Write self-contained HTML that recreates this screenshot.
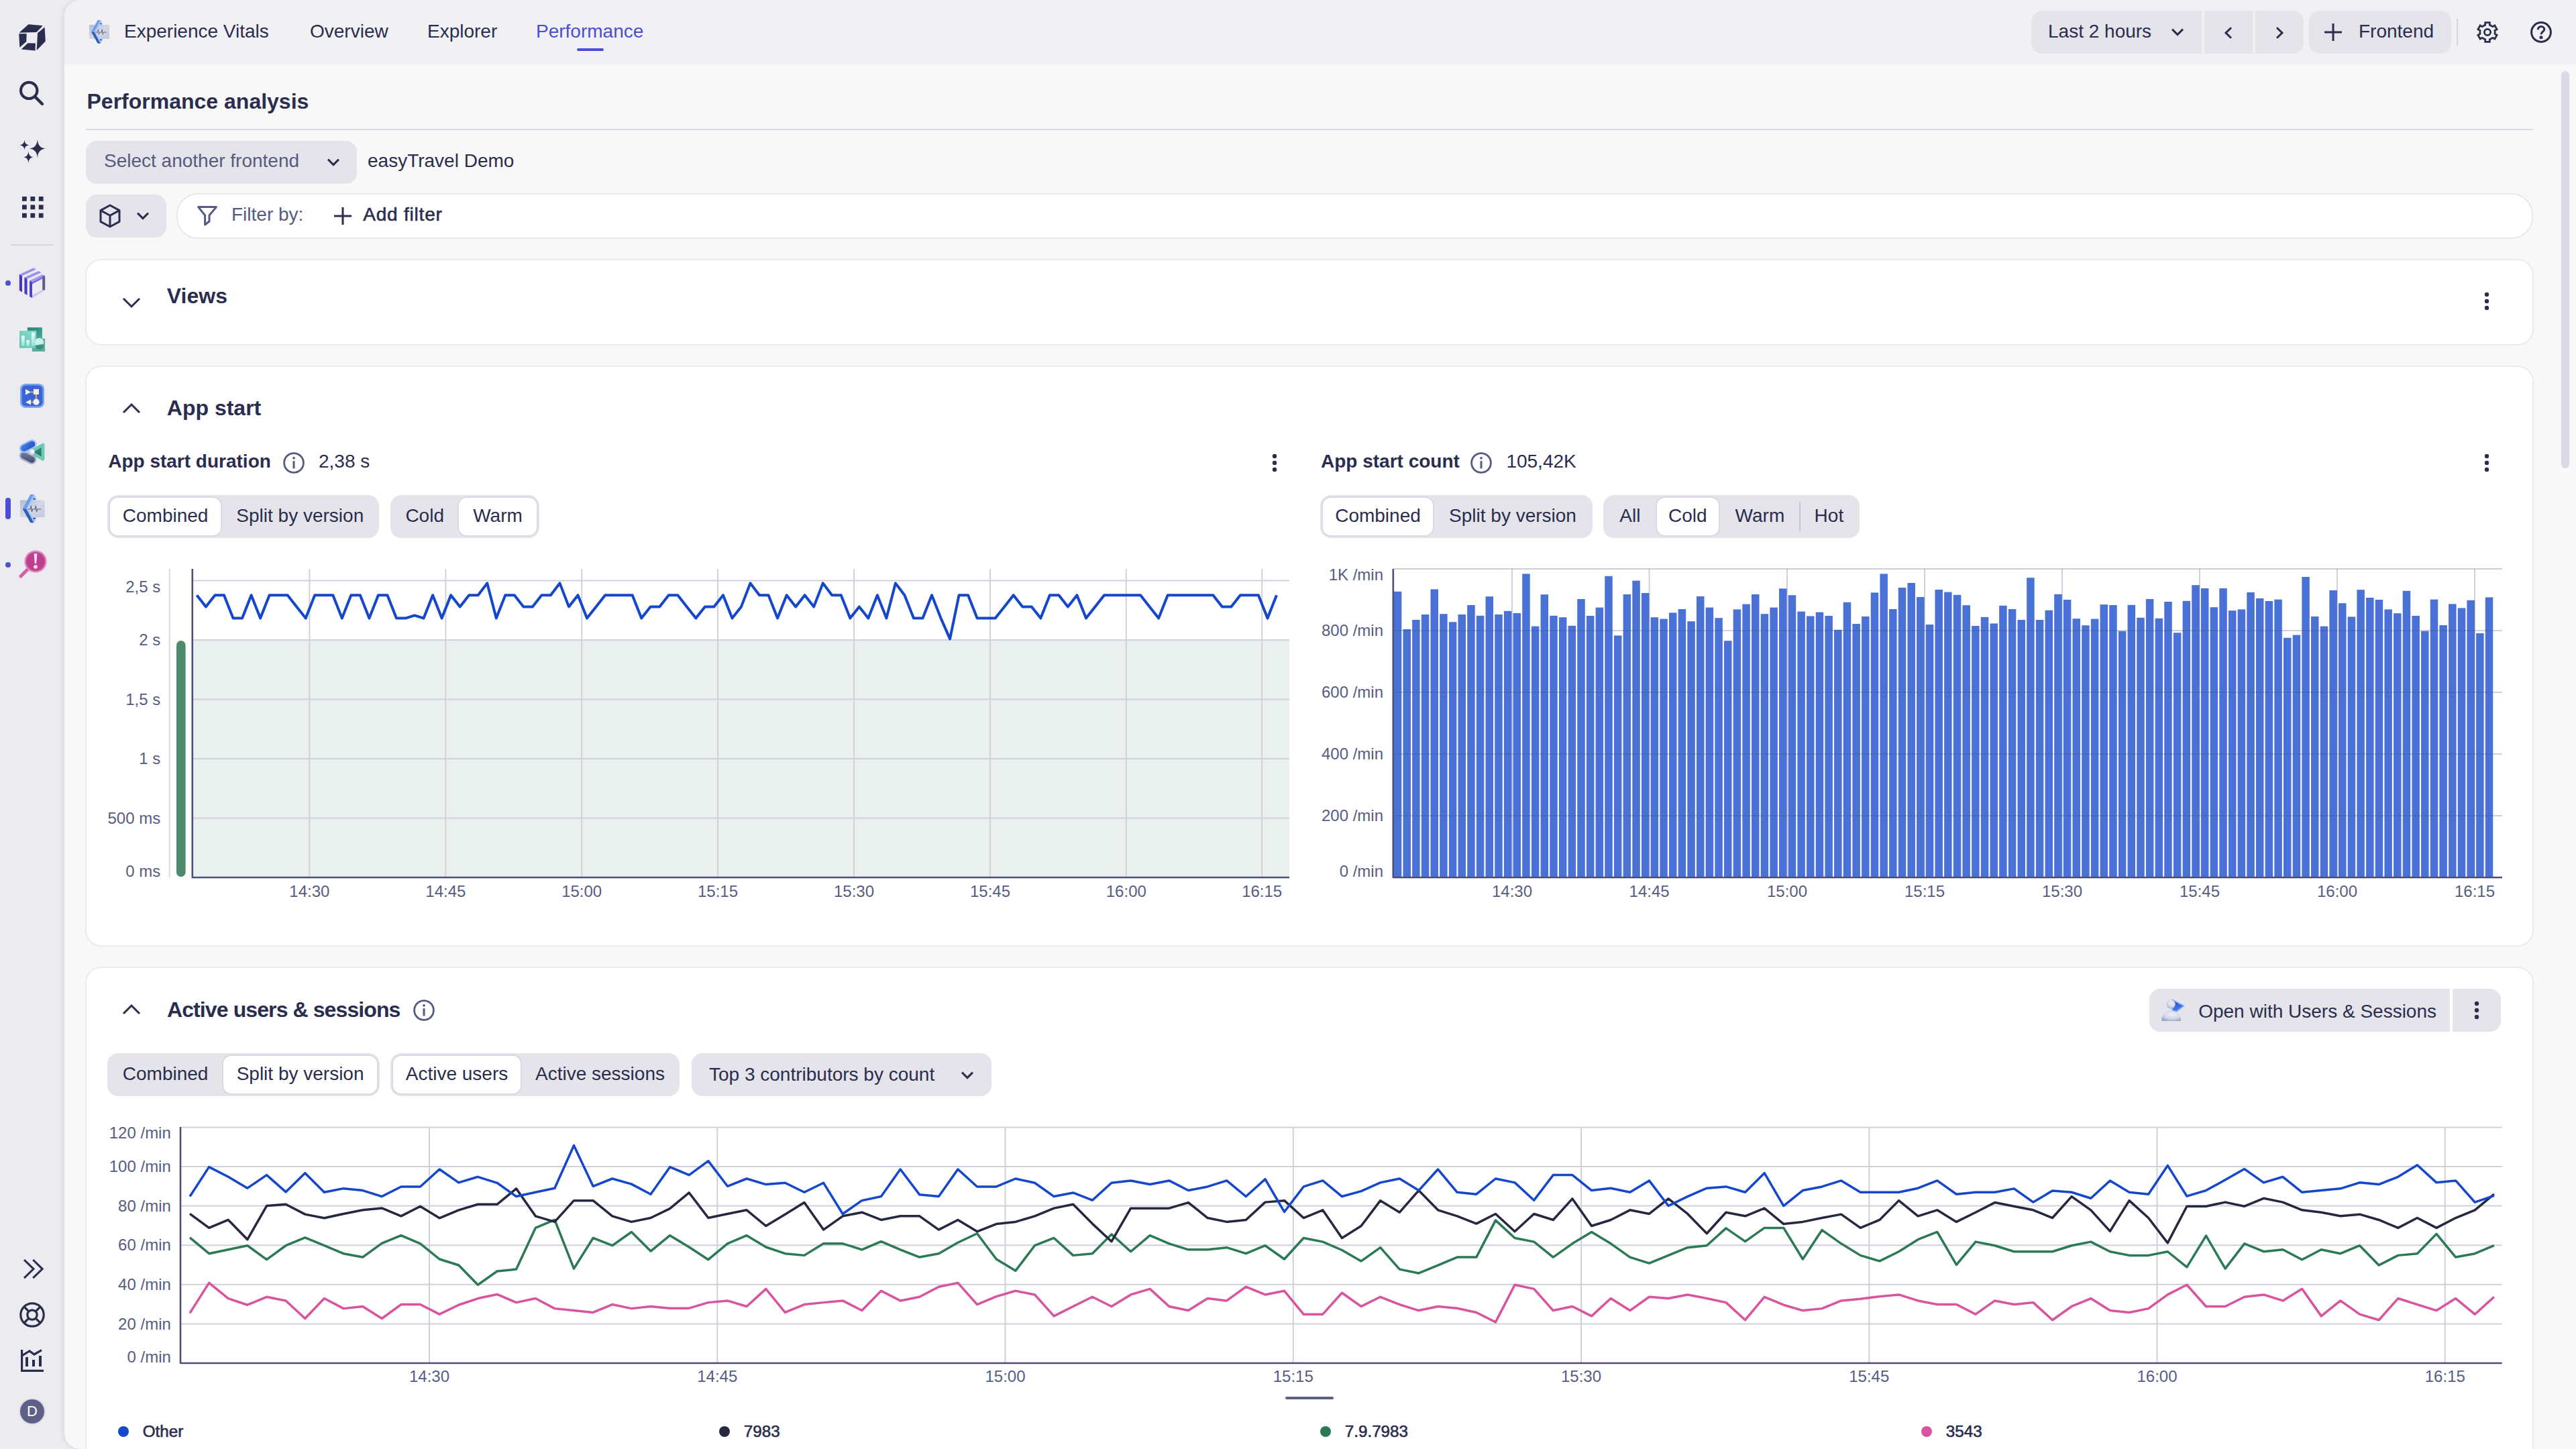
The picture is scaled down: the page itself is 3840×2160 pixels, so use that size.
<!DOCTYPE html>
<html><head><meta charset="utf-8"><title>Experience Vitals - Performance</title><style>
html,body{margin:0;padding:0;overflow:hidden;background:#f8f8f9;}
#root{position:relative;width:1920px;height:1080px;zoom:2;overflow:hidden;font-family:"Liberation Sans",sans-serif;color:#2a2d4e;background:#ebebf0;}
.a{position:absolute;box-sizing:border-box;}
.t{position:absolute;white-space:nowrap;}
svg{position:absolute;overflow:visible;}
@media (max-width: 2600px){#root{zoom:1;}}
</style></head>
<body><div id="root">
<div class="a" style="left:48px;top:0px;width:1872px;height:1080px;background:#f8f8f9;border-radius:12px 0 0 12px;box-shadow:-1px 0 3px rgba(40,40,70,0.10);"></div>
<div class="a" style="left:48px;top:0px;width:1872px;height:48px;background:#f1f1f4;border-radius:12px 0 0 0;"></div>
<svg style="left:14px;top:18px" width="20" height="20" viewBox="0 0 20 20" fill="#2a2d4e"><path d="M0.31 6.32 L7.21 0.1 L17.91 1.14 L13.25 5.97 Z"/><path d="M14.03 6.58 L19.29 2.26 L19.9 12.79 L13.34 19.52 Z"/><path d="M0.14 7.18 L5.83 7.18 L5.66 13.05 L0.66 17.36 Z"/><path d="M1.87 18.74 L6.7 14.08 L12.48 14.25 L12.22 19.77 Z"/></svg>
<svg style="left:13.5px;top:59.5px" width="20" height="20" viewBox="0 0 20 20"><circle cx="8.1" cy="7.95" r="6.1" fill="none" stroke="#2a2d4e" stroke-width="2"/><path d="M12.8 12.8 L18 18" stroke="#2a2d4e" stroke-width="2.2" stroke-linecap="round"/></svg>
<svg style="left:14px;top:103px" width="20" height="20" viewBox="0 0 20 20" fill="#2a2d4e"><path d="M13.90 0.90 Q14.32 7.32 19.90 7.80 Q14.32 8.28 13.90 14.70 Q13.48 8.28 7.90 7.80 Q13.48 7.32 13.90 0.90 Z M4.20 1.40 Q4.45 4.84 7.70 5.10 Q4.45 5.36 4.20 8.80 Q3.96 5.36 0.70 5.10 Q3.96 4.84 4.20 1.40 Z M7.20 9.90 Q7.45 13.81 10.80 14.10 Q7.45 14.39 7.20 18.30 Q6.95 14.39 3.60 14.10 Q6.95 13.81 7.20 9.90 Z"/></svg>
<svg style="left:15.5px;top:145.5px" width="17" height="17" viewBox="0 0 17 17" fill="#2a2d4e"><rect x="1.0" y="1.0" width="3.4" height="3.4"/><rect x="1.0" y="7.2" width="3.4" height="3.4"/><rect x="1.0" y="13.4" width="3.4" height="3.4"/><rect x="7.2" y="1.0" width="3.4" height="3.4"/><rect x="7.2" y="7.2" width="3.4" height="3.4"/><rect x="7.2" y="13.4" width="3.4" height="3.4"/><rect x="13.4" y="1.0" width="3.4" height="3.4"/><rect x="13.4" y="7.2" width="3.4" height="3.4"/><rect x="13.4" y="13.4" width="3.4" height="3.4"/></svg>
<div class="a" style="left:8px;top:182px;width:32px;height:1px;background:#d6d6e0;"></div>
<div class="a" style="left:4px;top:209px;width:4px;height:4px;border-radius:2px;background:#4b4fd0"></div>
<svg style="left:14px;top:199.5px" width="20" height="23" viewBox="0 0 20 23">
<path d="M0.4 5 L11 0.2 L13 1.3 L2.5 6.1 Z" fill="#9d90f5"/><path d="M0.4 5 L2.5 6.1 L2.5 18.2 L0.4 17 Z" fill="#4636c0"/>
<path d="M4.2 7.3 L14.8 2.5 L16.8 3.6 L6.3 8.4 Z" fill="#9d90f5"/><path d="M4.2 7.3 L6.3 8.4 L6.3 20.5 L4.2 19.3 Z" fill="#4a3cc8"/>
<path d="M8 9.6 L17.6 5 L19.6 6.1 L10 10.7 Z" fill="#a99cf7"/><path d="M8 9.6 L10 10.7 L10 22.6 L8 21.5 Z" fill="#4f42d0"/>
<path d="M17.6 6.1 L19.6 6.1 L19.6 16.6 L17.6 17.6 Z" fill="#5d6080"/>
<path d="M10 20.5 L17.6 16.6 L19.6 16.6 L10 22.6 Z" fill="#c9c6f5"/>
<path d="M10 10.7 L17.6 6.6 L17.6 8.2 L10 12.3 Z" fill="#7b6ee8"/>
</svg>
<svg style="left:14px;top:244px" width="20" height="18" viewBox="0 0 20 18">
<defs>
<linearGradient id="tc1" x1="0" y1="0" x2="1" y2="1"><stop offset="0" stop-color="#2a8676"/><stop offset="1" stop-color="#4aa898"/></linearGradient>
<linearGradient id="tc2" x1="0" y1="1" x2="1" y2="0"><stop offset="0" stop-color="#62bfae"/><stop offset="1" stop-color="#8fe0d3"/></linearGradient>
<linearGradient id="tc3" x1="0" y1="0" x2="0" y2="1"><stop offset="0" stop-color="#ecfffb"/><stop offset="1" stop-color="#8fe3d7"/></linearGradient>
</defs>
<rect x="6.43" y="0.04" width="11.03" height="8.4" fill="url(#tc1)"/>
<rect x="9.93" y="8.38" width="9.6" height="9.6" fill="#56ae9e"/>
<rect x="0.51" y="2.55" width="12.56" height="12.82" fill="url(#tc2)"/>
<rect x="1.95" y="6.13" width="2.42" height="7.8" fill="url(#tc3)"/>
<rect x="5.62" y="9.54" width="2.34" height="4.4" fill="url(#tc3)"/>
<rect x="9.48" y="3.9" width="2.42" height="10.04" fill="url(#tc3)"/>
<path d="M12.15 13.35 A3.2 3.2 0 0 0 18.55 13.35 Z" fill="#3f8b7d"/>
<path d="M12.15 13.35 L12.15 10.15 A3.2 3.2 0 0 1 18.4 12.3 Z" fill="#c8f3ec"/>
</svg>
<svg style="left:15px;top:286px" width="18" height="18" viewBox="0 0 18 18">
<rect x="0" y="0" width="18" height="18" rx="4" fill="#7aa3f4"/><rect x="1.3" y="1.3" width="15.4" height="15.4" rx="3" fill="#3d64d4"/>
<path d="M4 4 L8 6.2 L4 8.4 Z" fill="#eef2ff"/><rect x="10" y="4" width="4" height="4" fill="#eef2ff"/>
<path d="M8 11.8 L4 13.8 L8 15.8 Z" fill="#eef2ff"/><circle cx="12" cy="13.6" r="2.3" fill="#eef2ff"/>
<path d="M8 6.2 L10 6.2 M12 8 L12 11.3 M8 13.8 L9.8 13.8" stroke="#f0a83c" stroke-width="1"/>
</svg>
<svg style="left:13px;top:326px" width="22" height="22" viewBox="0 0 22 22">
<defs>
<linearGradient id="sh1" x1="0" y1="0" x2="1" y2="1"><stop offset="0" stop-color="#4f86e6"/><stop offset="1" stop-color="#1a4cc0"/></linearGradient>
<linearGradient id="sh2" x1="0" y1="0" x2="1" y2="1"><stop offset="0" stop-color="#8089a8"/><stop offset="1" stop-color="#363e5e"/></linearGradient>
<linearGradient id="sh3" x1="0" y1="0" x2="1" y2="1"><stop offset="0" stop-color="#4a9a88"/><stop offset="1" stop-color="#22695a"/></linearGradient>
<radialGradient id="sh4" cx="0.6" cy="0.35" r="0.7"><stop offset="0" stop-color="#ffffff"/><stop offset="1" stop-color="#c9cde6"/></radialGradient>
</defs>
<g transform="rotate(27 7.8 15.1)"><rect x="1.6" y="12.2" width="12.4" height="5.8" rx="2.9" fill="url(#sh2)" stroke="#a9b2cd" stroke-width="1.2"/></g>
<g transform="rotate(-27 7.8 6.6)"><rect x="1.6" y="3.7" width="12.4" height="5.8" rx="2.9" fill="url(#sh1)" stroke="#9cc0ff" stroke-width="1.2"/></g>
<path d="M9.3 10.9 L19 5.6 L19 16.2 Z" fill="url(#sh3)" stroke="#6ccab8" stroke-width="2.4" stroke-linejoin="round"/>
<circle cx="10.75" cy="10.9" r="2.15" fill="url(#sh4)"/>
</svg>
<div class="a" style="left:4px;top:371px;width:4px;height:16px;border-radius:2px;background:#4b4fd6"></div>
<svg style="left:14.9px;top:368.5px" width="18.3" height="21.2" viewBox="3.48 3.15 15 17.4">
<defs><linearGradient id="evg1" x1="0" y1="0" x2="1" y2="1"><stop offset="0" stop-color="#b3b9ce"/><stop offset="0.5" stop-color="#d3d8e8"/><stop offset="1" stop-color="#c2c8de"/></linearGradient></defs>
<rect x="3.48" y="6.63" width="15" height="10.52" rx="0.6" fill="url(#evg1)"/>
<path d="M11.93 3.15 L13.75 6.3 L11.0 6.3 Z" fill="#a9c4f2"/><path d="M11.43 4.97 L13.09 6.3 L11.0 6.3 Z" fill="#1e3f9a"/>
<path d="M11.93 20.54 L13.75 17.4 L11.2 17.4 Z" fill="#a9c4f2"/><path d="M11.43 18.72 L13.25 17.4 L11.43 17.4 Z" fill="#1e3f9a"/>
<path d="M9.77 3.15 L11.93 3.15 L7.29 11.93 L4.97 11.93 Z" fill="#6a9ef0"/>
<path d="M4.97 11.93 L7.29 11.93 L11.93 20.54 L9.77 20.54 Z" fill="#2e60b8"/>
<path d="M11.93 3.15 L12.5 4.1 L8.0 11.93 L7.29 11.93 Z" fill="#a9c4f2"/>
<path d="M7.29 11.93 L8.0 11.93 L12.5 19.6 L11.93 20.54 Z" fill="#a9c4f2"/>
<path d="M8.1 12.2 L9.7 12.2 L10.2 10 L10.6 13.8 L11.2 12.2 L12.6 12.2 L13.1 10 L13.5 13.8 L14.1 12.2 L16.3 12.2" fill="none" stroke="#5a5f72" stroke-width="0.45"/>
</svg>
<div class="a" style="left:4px;top:419px;width:4px;height:4px;border-radius:2px;background:#4b4fd0"></div>
<svg style="left:14px;top:410px" width="21" height="21" viewBox="0 0 21 21">
<path d="M7 14 L1.5 19.5" stroke="#d362a8" stroke-width="2.6" stroke-linecap="round"/>
<circle cx="12.5" cy="8.5" r="8.3" fill="#e083c0"/><circle cx="12.5" cy="8.5" r="7" fill="#bd3f8e"/>
<path d="M11.3 2.6 L13.7 2.6 L13.1 10 L11.9 10 Z" fill="#fbe6f3"/><circle cx="12.5" cy="12.5" r="1.4" fill="#fbe6f3"/>
</svg>
<svg style="left:17px;top:938px" width="16" height="16" viewBox="0 0 16 16" fill="none" stroke="#2a2d4e" stroke-width="1.5"><path d="M1 1 L8 7.8 L1 14.6"/><path d="M7.6 1 L14.6 7.8 L7.6 14.6"/></svg>
<svg style="left:14.5px;top:970.5px" width="19" height="19" viewBox="0 0 19 19" fill="none" stroke="#2a2d4e" stroke-width="1.6"><circle cx="9.5" cy="9.5" r="8.6"/><circle cx="9.5" cy="9.5" r="3.6"/><path d="M3.5 3.5 L6.9 6.9 M15.5 3.5 L12.1 6.9 M3.5 15.5 L6.9 12.1 M15.5 15.5 L12.1 12.1"/></svg>
<svg style="left:15.5px;top:1005.5px" width="17" height="17" viewBox="0 0 17 17" fill="none" stroke="#2a2d4e" stroke-width="1.6"><path d="M0.8 0.5 L0.8 16.2 L17 16.2"/><path d="M0.8 5 L6.5 1.5 L10 4 L15.5 0.8"/><path d="M4.5 6 L4.5 13 M9.5 8 L9.5 13 M14.5 5 L14.5 13" stroke-width="2"/></svg>
<div class="a" style="left:15px;top:1043px;width:18px;height:18px;border-radius:9px;background:#5d6087;box-shadow:0 0 0 1px #dcdcea;color:#fff;font-size:11px;line-height:18px;text-align:center;">D</div>
<svg style="left:66.48px;top:15.15px" width="15" height="17.4" viewBox="3.48 3.15 15 17.4">
<defs><linearGradient id="evg2" x1="0" y1="0" x2="1" y2="1"><stop offset="0" stop-color="#b3b9ce"/><stop offset="0.5" stop-color="#d3d8e8"/><stop offset="1" stop-color="#c2c8de"/></linearGradient></defs>
<rect x="3.48" y="6.63" width="15" height="10.52" rx="0.6" fill="url(#evg2)"/>
<path d="M11.93 3.15 L13.75 6.3 L11.0 6.3 Z" fill="#a9c4f2"/><path d="M11.43 4.97 L13.09 6.3 L11.0 6.3 Z" fill="#1e3f9a"/>
<path d="M11.93 20.54 L13.75 17.4 L11.2 17.4 Z" fill="#a9c4f2"/><path d="M11.43 18.72 L13.25 17.4 L11.43 17.4 Z" fill="#1e3f9a"/>
<path d="M9.77 3.15 L11.93 3.15 L7.29 11.93 L4.97 11.93 Z" fill="#6a9ef0"/>
<path d="M4.97 11.93 L7.29 11.93 L11.93 20.54 L9.77 20.54 Z" fill="#2e60b8"/>
<path d="M11.93 3.15 L12.5 4.1 L8.0 11.93 L7.29 11.93 Z" fill="#a9c4f2"/>
<path d="M7.29 11.93 L8.0 11.93 L12.5 19.6 L11.93 20.54 Z" fill="#a9c4f2"/>
<path d="M8.1 12.2 L9.7 12.2 L10.2 10 L10.6 13.8 L11.2 12.2 L12.6 12.2 L13.1 10 L13.5 13.8 L14.1 12.2 L16.3 12.2" fill="none" stroke="#5a5f72" stroke-width="0.45"/>
</svg>
<div class="t " style="left:92.5px;top:13.25px;font-size:14px;line-height:20px;">Experience Vitals</div>
<div class="t " style="left:231px;top:13.25px;font-size:14px;line-height:20px;">Overview</div>
<div class="t " style="left:318.5px;top:13.25px;font-size:14px;line-height:20px;">Explorer</div>
<div class="t " style="left:399.5px;top:13.25px;font-size:14px;line-height:20px;color:#4a4fd0;">Performance</div>
<div class="a" style="left:430px;top:36px;width:20px;height:2px;background:#4a4fd0;border-radius:1px;"></div>
<div class="a" style="left:1514px;top:8px;width:127px;height:32px;background:#e4e4ea;border-radius:8px 0 0 8px;"></div>
<div class="t " style="left:1526.5px;top:13.25px;font-size:14px;line-height:20px;">Last 2 hours</div>
<svg style="left:1618px;top:21px" width="10" height="6" viewBox="0 0 10 6" fill="none" stroke="#2a2d4e" stroke-width="1.5"><path d="M1 0.8 L5 4.8 L9 0.8"/></svg>
<div class="a" style="left:1643px;top:8px;width:36px;height:32px;background:#e4e4ea;"></div>
<svg style="left:1657.5px;top:20px" width="7" height="9" viewBox="0 0 7 9" fill="none" stroke="#2a2d4e" stroke-width="1.5"><path d="M5.5 0.6 L1.5 4.5 L5.5 8.4"/></svg>
<div class="a" style="left:1681px;top:8px;width:36px;height:32px;background:#e4e4ea;border-radius:0 8px 8px 0;"></div>
<svg style="left:1695.5px;top:20px" width="7" height="9" viewBox="0 0 7 9" fill="none" stroke="#2a2d4e" stroke-width="1.5"><path d="M1.5 0.6 L5.5 4.5 L1.5 8.4"/></svg>
<div class="a" style="left:1721px;top:8px;width:106px;height:32px;background:#e4e4ea;border-radius:8px;"></div>
<svg style="left:1732.5px;top:17.5px" width="13" height="13" viewBox="0 0 13 13" stroke="#2a2d4e" stroke-width="1.5"><path d="M6.5 0 L6.5 13 M0 6.5 L13 6.5"/></svg>
<div class="t " style="left:1758px;top:13.25px;font-size:14px;line-height:20px;">Frontend</div>
<div class="a" style="left:1831px;top:14px;width:1px;height:20px;background:#d4d4de;"></div>
<svg style="left:1846px;top:16px" width="16" height="16" viewBox="0 0 16 16" fill="none" stroke="#2a2d4e" stroke-width="1.4" stroke-linejoin="miter"><path d="M6.35 2.54 L6.35 0.80 L9.65 0.80 L9.65 2.54 L11.90 3.84 L13.41 2.97 L15.06 5.83 L13.55 6.70 L13.55 9.30 L15.06 10.17 L13.41 13.03 L11.90 12.16 L9.65 13.46 L9.65 15.20 L6.35 15.20 L6.35 13.46 L4.10 12.16 L2.59 13.03 L0.94 10.17 L2.45 9.30 L2.45 6.70 L0.94 5.83 L2.59 2.97 L4.10 3.84 Z"/><circle cx="8" cy="8" r="2.3"/></svg>
<svg style="left:1886px;top:16px" width="16" height="16" viewBox="0 0 16 16" fill="none" stroke="#2a2d4e" stroke-width="1.5"><circle cx="8" cy="8" r="7.2"/><path d="M5.6 6.1 C5.6 4.6 6.7 3.8 8 3.8 C9.4 3.8 10.4 4.7 10.4 5.9 C10.4 7.6 8 7.7 8 9.6"/><circle cx="8" cy="11.9" r="0.5" fill="#2a2d4e"/></svg>
<div class="a" style="left:1909px;top:53px;width:6px;height:296px;background:#dadae4;border-radius:3px;"></div>
<div class="t " style="left:64.75px;top:65.71px;font-size:16px;line-height:20px;font-weight:700;">Performance analysis</div>
<div class="a" style="left:64px;top:96px;width:1824px;height:1px;background:#d6d8e4;"></div>
<div class="a" style="left:64px;top:105px;width:202px;height:32px;background:#e4e4ea;border-radius:8px;"></div>
<div class="t " style="left:77.5px;top:110.15px;font-size:14px;line-height:20px;color:#555b82;">Select another frontend</div>
<svg style="left:243.5px;top:118px" width="10" height="6" viewBox="0 0 10 6" fill="none" stroke="#2a2d4e" stroke-width="1.5"><path d="M1 0.8 L5 4.8 L9 0.8"/></svg>
<div class="t " style="left:274px;top:110.15px;font-size:14px;line-height:20px;">easyTravel Demo</div>
<div class="a" style="left:64px;top:145px;width:60px;height:32px;background:#e4e4ea;border-radius:8px;"></div>
<svg style="left:74px;top:152px" width="16" height="18" viewBox="0 0 16 18" fill="none" stroke="#2a2d4e" stroke-width="1.5" stroke-linejoin="round"><path d="M8 1 L15 4.8 L15 13.2 L8 17 L1 13.2 L1 4.8 Z"/><path d="M1 4.8 L8 8.6 L15 4.8 M8 8.6 L8 17"/></svg>
<svg style="left:101.5px;top:158px" width="10" height="6" viewBox="0 0 10 6" fill="none" stroke="#2a2d4e" stroke-width="1.5"><path d="M1 0.8 L5 4.8 L9 0.8"/></svg>
<div class="a" style="left:131.5px;top:144px;width:1756.5px;height:34px;background:#fff;border:1px solid #e9e9ed;border-radius:16px;"></div>
<svg style="left:147px;top:153.5px" width="15" height="15" viewBox="0 0 15 15" fill="none" stroke="#555b82" stroke-width="1.5" stroke-linejoin="round"><path d="M0.8 0.8 L14.2 0.8 L9 7 L9 11.5 L5.8 14 L5.8 7 Z"/></svg>
<div class="t " style="left:172.5px;top:150.15px;font-size:14px;line-height:20px;color:#555b82;">Filter by:</div>
<svg style="left:249px;top:154.5px" width="13" height="13" viewBox="0 0 13 13" stroke="#2a2d4e" stroke-width="1.5"><path d="M6.5 0 L6.5 13 M0 6.5 L13 6.5"/></svg>
<div class="t " style="left:270.6px;top:150.15px;font-size:14px;line-height:20px;-webkit-text-stroke:0.3px #2a2d4e;letter-spacing:0.4px;">Add filter</div>
<div class="a" style="left:63.6px;top:193px;width:1824.9px;height:64.3px;background:#fff;border:1px solid #ebebef;border-radius:12px;"></div>
<svg style="left:91.0px;top:221.8px" width="14" height="7.0" viewBox="0 0 14 7.0" fill="none" stroke="#2a2d4e" stroke-width="1.5"><path d="M1 0.5 L7.0 6.5 L13 0.5"/></svg>
<div class="t " style="left:124.4px;top:210.46px;font-size:16px;line-height:20px;font-weight:700;">Views</div>
<svg style="left:1851.6px;top:217.5px" width="4" height="14" viewBox="0 0 4 14" fill="#2a2d4e"><circle cx="2" cy="2" r="1.6"/><circle cx="2" cy="7" r="1.6"/><circle cx="2" cy="12" r="1.6"/></svg>
<div class="a" style="left:63.6px;top:272.5px;width:1824.9px;height:433px;background:#fff;border:1px solid #ebebef;border-radius:12px;"></div>
<svg style="left:91.0px;top:301.2px" width="14" height="7.0" viewBox="0 0 14 7.0" fill="none" stroke="#2a2d4e" stroke-width="1.5"><path d="M1 6.5 L7.0 0.5 L13 6.5"/></svg>
<div class="t " style="left:124.4px;top:294.21px;font-size:16px;line-height:20px;font-weight:700;">App start</div>
<div class="t " style="left:80.6px;top:334.15px;font-size:14px;line-height:20px;font-weight:700;">App start duration</div>
<svg style="left:211px;top:337px" width="16" height="16" viewBox="0 0 16 16"><circle cx="8" cy="8" r="7.2" fill="none" stroke="#545a80" stroke-width="1.4"/><rect x="7.25" y="6.6" width="1.5" height="5.6" fill="#545a80"/><circle cx="8" cy="4.4" r="0.95" fill="#545a80"/></svg>
<div class="t " style="left:237.5px;top:334.15px;font-size:14px;line-height:20px;">2,38 s</div>
<svg style="left:948px;top:338px" width="4" height="14" viewBox="0 0 4 14" fill="#2a2d4e"><circle cx="2" cy="2" r="1.6"/><circle cx="2" cy="7" r="1.6"/><circle cx="2" cy="12" r="1.6"/></svg>
<div class="a" style="left:80px;top:369px;width:202.7px;height:32px;background:#e4e4ea;border-radius:8px;"></div>
<div class="a" style="left:81px;top:370px;width:84.6px;height:30px;background:#fff;border:1px solid #d9dae3;border-radius:7px;"></div>
<div class="t" style="left:76.00px;width:94.6px;top:374.45px;font-size:14px;line-height:20px;text-align:center;">Combined</div>
<div class="t" style="left:160.60px;width:126.1px;top:374.45px;font-size:14px;line-height:20px;text-align:center;">Split by version</div>
<div class="a" style="left:291px;top:369px;width:110.80000000000001px;height:32px;background:#e4e4ea;border-radius:8px;"></div>
<div class="t" style="left:287.00px;width:59.2px;top:374.45px;font-size:14px;line-height:20px;text-align:center;">Cold</div>
<div class="a" style="left:341.2px;top:370px;width:59.6px;height:30px;background:#fff;border:1px solid #d9dae3;border-radius:7px;"></div>
<div class="t" style="left:336.20px;width:69.6px;top:374.45px;font-size:14px;line-height:20px;text-align:center;">Warm</div>
<div class="t " style="left:984.5px;top:334.15px;font-size:14px;line-height:20px;font-weight:700;">App start count</div>
<svg style="left:1096px;top:337px" width="16" height="16" viewBox="0 0 16 16"><circle cx="8" cy="8" r="7.2" fill="none" stroke="#545a80" stroke-width="1.4"/><rect x="7.25" y="6.6" width="1.5" height="5.6" fill="#545a80"/><circle cx="8" cy="4.4" r="0.95" fill="#545a80"/></svg>
<div class="t " style="left:1122.7px;top:334.15px;font-size:14px;line-height:20px;">105,42K</div>
<svg style="left:1851.6px;top:338px" width="4" height="14" viewBox="0 0 4 14" fill="#2a2d4e"><circle cx="2" cy="2" r="1.6"/><circle cx="2" cy="7" r="1.6"/><circle cx="2" cy="12" r="1.6"/></svg>
<div class="a" style="left:984px;top:369px;width:203px;height:32px;background:#e4e4ea;border-radius:8px;"></div>
<div class="a" style="left:985px;top:370px;width:84px;height:30px;background:#fff;border:1px solid #d9dae3;border-radius:7px;"></div>
<div class="t" style="left:980.00px;width:94px;top:374.45px;font-size:14px;line-height:20px;text-align:center;">Combined</div>
<div class="t" style="left:1064.00px;width:127px;top:374.45px;font-size:14px;line-height:20px;text-align:center;">Split by version</div>
<div class="a" style="left:1195px;top:369px;width:191.0px;height:32px;background:#e4e4ea;border-radius:8px;"></div>
<div class="t" style="left:1191.00px;width:47.8px;top:374.45px;font-size:14px;line-height:20px;text-align:center;">All</div>
<div class="a" style="left:1233.8px;top:370px;width:48.2px;height:30px;background:#fff;border:1px solid #d9dae3;border-radius:7px;"></div>
<div class="t" style="left:1228.80px;width:58.2px;top:374.45px;font-size:14px;line-height:20px;text-align:center;">Cold</div>
<div class="t" style="left:1277.00px;width:69.4px;top:374.45px;font-size:14px;line-height:20px;text-align:center;">Warm</div>
<div class="t" style="left:1336.40px;width:53.6px;top:374.45px;font-size:14px;line-height:20px;text-align:center;">Hot</div>
<div class="a" style="left:1341px;top:374px;width:1px;height:22px;background:#c8c8d4;"></div>
<div class="a" style="left:63.6px;top:720.3px;width:1824.9px;height:420px;background:#fff;border:1px solid #ebebef;border-radius:12px;"></div>
<svg style="left:0;top:0" width="1920" height="1080" viewBox="0 0 1920 1080">
<rect x="143.4" y="477.00" width="817.6" height="177.00" fill="#eaf0ee"/>
<line x1="143.4" x2="961" y1="609.75" y2="609.75" stroke="#cfd1dd" stroke-width="1"/>
<line x1="143.4" x2="961" y1="565.50" y2="565.50" stroke="#cfd1dd" stroke-width="1"/>
<line x1="143.4" x2="961" y1="521.25" y2="521.25" stroke="#cfd1dd" stroke-width="1"/>
<line x1="143.4" x2="961" y1="477.00" y2="477.00" stroke="#cfd1dd" stroke-width="1"/>
<line x1="143.4" x2="961" y1="432.75" y2="432.75" stroke="#cfd1dd" stroke-width="1"/>
<line x1="230.7" x2="230.7" y1="424" y2="654" stroke="#cfd1dd" stroke-width="1"/>
<line x1="332.2" x2="332.2" y1="424" y2="654" stroke="#cfd1dd" stroke-width="1"/>
<line x1="433.6" x2="433.6" y1="424" y2="654" stroke="#cfd1dd" stroke-width="1"/>
<line x1="535" x2="535" y1="424" y2="654" stroke="#cfd1dd" stroke-width="1"/>
<line x1="636.5" x2="636.5" y1="424" y2="654" stroke="#cfd1dd" stroke-width="1"/>
<line x1="738" x2="738" y1="424" y2="654" stroke="#cfd1dd" stroke-width="1"/>
<line x1="839.4" x2="839.4" y1="424" y2="654" stroke="#cfd1dd" stroke-width="1"/>
<line x1="940.6" x2="940.6" y1="424" y2="654" stroke="#cfd1dd" stroke-width="1"/>
<line x1="126.4" x2="126.4" y1="424" y2="654" stroke="#dcdce6" stroke-width="1"/>
<rect x="131.5" y="477.5" width="6.8" height="176" rx="3.4" fill="#4b8a6c"/>
<polyline points="146.70,443.60 153.46,452.20 160.23,443.60 166.99,443.60 173.75,460.80 180.52,460.80 187.28,443.60 194.04,460.80 200.80,443.60 207.57,443.60 214.33,443.60 221.09,452.20 227.86,460.80 234.62,443.60 241.38,443.60 248.15,443.60 254.91,460.80 261.67,443.60 268.43,443.60 275.20,460.80 281.96,443.60 288.72,443.60 295.49,460.80 302.25,460.80 309.01,458.70 315.78,460.80 322.54,443.60 329.30,460.80 336.06,443.60 342.83,452.20 349.59,443.60 356.35,443.60 363.12,434.70 369.88,460.80 376.64,443.60 383.41,443.60 390.17,452.20 396.93,452.20 403.69,443.60 410.46,443.60 417.22,434.70 423.98,452.20 430.75,443.60 437.51,460.80 444.27,452.20 451.04,443.60 457.80,443.60 464.56,443.60 471.33,443.60 478.09,460.80 484.85,452.20 491.61,452.20 498.38,443.60 505.14,443.60 511.90,452.20 518.67,460.80 525.43,452.20 532.19,452.20 538.96,443.60 545.72,460.80 552.48,452.20 559.24,434.70 566.01,443.60 572.77,443.60 579.53,460.80 586.30,443.60 593.06,452.20 599.82,443.60 606.59,452.20 613.35,434.70 620.11,443.60 626.87,443.60 633.64,460.80 640.40,452.20 647.16,460.80 653.93,443.60 660.69,460.80 667.45,434.70 674.22,443.60 680.98,460.80 687.74,460.80 694.51,443.60 701.27,460.80 708.03,476.20 714.79,443.60 721.56,443.60 728.32,460.80 735.08,460.80 741.85,460.80 748.61,452.20 755.37,443.60 762.14,452.20 768.90,452.20 775.66,460.80 782.42,443.60 789.19,443.60 795.95,452.20 802.71,443.60 809.48,460.80 816.24,452.20 823.00,443.60 829.77,443.60 836.53,443.60 843.29,443.60 850.05,443.60 856.82,452.20 863.58,460.80 870.34,443.60 877.11,443.60 883.87,443.60 890.63,443.60 897.40,443.60 904.16,443.60 910.92,452.20 917.68,452.20 924.45,443.60 931.21,443.60 937.97,443.60 944.74,460.80 951.50,443.60" fill="none" stroke="#1447cc" stroke-width="2" stroke-linejoin="round"/>
<line x1="143.4" x2="143.4" y1="424" y2="654.5" stroke="#4d5075" stroke-width="1.3"/>
<line x1="143.4" x2="961" y1="654" y2="654" stroke="#4d5075" stroke-width="1.3"/>
<rect x="1038.90" y="440.90" width="5.75" height="213.10" fill="#4a72d6"/>
<rect x="1045.74" y="469.00" width="5.75" height="185.00" fill="#4a72d6"/>
<rect x="1052.57" y="462.00" width="5.75" height="192.00" fill="#4a72d6"/>
<rect x="1059.41" y="458.00" width="5.75" height="196.00" fill="#4a72d6"/>
<rect x="1066.24" y="439.20" width="5.75" height="214.80" fill="#4a72d6"/>
<rect x="1073.08" y="457.60" width="5.75" height="196.40" fill="#4a72d6"/>
<rect x="1079.92" y="463.60" width="5.75" height="190.40" fill="#4a72d6"/>
<rect x="1086.75" y="458.00" width="5.75" height="196.00" fill="#4a72d6"/>
<rect x="1093.59" y="451.00" width="5.75" height="203.00" fill="#4a72d6"/>
<rect x="1100.42" y="458.90" width="5.75" height="195.10" fill="#4a72d6"/>
<rect x="1107.26" y="444.60" width="5.75" height="209.40" fill="#4a72d6"/>
<rect x="1114.10" y="458.00" width="5.75" height="196.00" fill="#4a72d6"/>
<rect x="1120.93" y="455.40" width="5.75" height="198.60" fill="#4a72d6"/>
<rect x="1127.77" y="457.00" width="5.75" height="197.00" fill="#4a72d6"/>
<rect x="1134.60" y="427.70" width="5.75" height="226.30" fill="#4a72d6"/>
<rect x="1141.44" y="466.80" width="5.75" height="187.20" fill="#4a72d6"/>
<rect x="1148.28" y="443.10" width="5.75" height="210.90" fill="#4a72d6"/>
<rect x="1155.11" y="458.90" width="5.75" height="195.10" fill="#4a72d6"/>
<rect x="1161.95" y="460.10" width="5.75" height="193.90" fill="#4a72d6"/>
<rect x="1168.78" y="466.40" width="5.75" height="187.60" fill="#4a72d6"/>
<rect x="1175.62" y="446.50" width="5.75" height="207.50" fill="#4a72d6"/>
<rect x="1182.46" y="459.00" width="5.75" height="195.00" fill="#4a72d6"/>
<rect x="1189.29" y="452.80" width="5.75" height="201.20" fill="#4a72d6"/>
<rect x="1196.13" y="429.40" width="5.75" height="224.60" fill="#4a72d6"/>
<rect x="1202.96" y="473.70" width="5.75" height="180.30" fill="#4a72d6"/>
<rect x="1209.80" y="443.00" width="5.75" height="211.00" fill="#4a72d6"/>
<rect x="1216.64" y="432.80" width="5.75" height="221.20" fill="#4a72d6"/>
<rect x="1223.47" y="442.00" width="5.75" height="212.00" fill="#4a72d6"/>
<rect x="1230.31" y="460.10" width="5.75" height="193.90" fill="#4a72d6"/>
<rect x="1237.14" y="461.30" width="5.75" height="192.70" fill="#4a72d6"/>
<rect x="1243.98" y="456.70" width="5.75" height="197.30" fill="#4a72d6"/>
<rect x="1250.82" y="454.00" width="5.75" height="200.00" fill="#4a72d6"/>
<rect x="1257.65" y="463.10" width="5.75" height="190.90" fill="#4a72d6"/>
<rect x="1264.49" y="444.50" width="5.75" height="209.50" fill="#4a72d6"/>
<rect x="1271.32" y="452.80" width="5.75" height="201.20" fill="#4a72d6"/>
<rect x="1278.16" y="460.60" width="5.75" height="193.40" fill="#4a72d6"/>
<rect x="1285.00" y="477.60" width="5.75" height="176.40" fill="#4a72d6"/>
<rect x="1291.83" y="454.20" width="5.75" height="199.80" fill="#4a72d6"/>
<rect x="1298.67" y="450.30" width="5.75" height="203.70" fill="#4a72d6"/>
<rect x="1305.50" y="443.00" width="5.75" height="211.00" fill="#4a72d6"/>
<rect x="1312.34" y="457.60" width="5.75" height="196.40" fill="#4a72d6"/>
<rect x="1319.18" y="452.80" width="5.75" height="201.20" fill="#4a72d6"/>
<rect x="1326.01" y="438.70" width="5.75" height="215.30" fill="#4a72d6"/>
<rect x="1332.85" y="443.60" width="5.75" height="210.40" fill="#4a72d6"/>
<rect x="1339.68" y="455.80" width="5.75" height="198.20" fill="#4a72d6"/>
<rect x="1346.52" y="459.20" width="5.75" height="194.80" fill="#4a72d6"/>
<rect x="1353.36" y="456.30" width="5.75" height="197.70" fill="#4a72d6"/>
<rect x="1360.19" y="459.00" width="5.75" height="195.00" fill="#4a72d6"/>
<rect x="1367.03" y="469.40" width="5.75" height="184.60" fill="#4a72d6"/>
<rect x="1373.86" y="448.90" width="5.75" height="205.10" fill="#4a72d6"/>
<rect x="1380.70" y="465.00" width="5.75" height="189.00" fill="#4a72d6"/>
<rect x="1387.54" y="459.50" width="5.75" height="194.50" fill="#4a72d6"/>
<rect x="1394.37" y="441.70" width="5.75" height="212.30" fill="#4a72d6"/>
<rect x="1401.21" y="427.70" width="5.75" height="226.30" fill="#4a72d6"/>
<rect x="1408.04" y="454.00" width="5.75" height="200.00" fill="#4a72d6"/>
<rect x="1414.88" y="438.00" width="5.75" height="216.00" fill="#4a72d6"/>
<rect x="1421.72" y="434.50" width="5.75" height="219.50" fill="#4a72d6"/>
<rect x="1428.55" y="445.00" width="5.75" height="209.00" fill="#4a72d6"/>
<rect x="1435.39" y="465.50" width="5.75" height="188.50" fill="#4a72d6"/>
<rect x="1442.22" y="439.50" width="5.75" height="214.50" fill="#4a72d6"/>
<rect x="1449.06" y="441.30" width="5.75" height="212.70" fill="#4a72d6"/>
<rect x="1455.90" y="443.40" width="5.75" height="210.60" fill="#4a72d6"/>
<rect x="1462.73" y="451.10" width="5.75" height="202.90" fill="#4a72d6"/>
<rect x="1469.57" y="466.50" width="5.75" height="187.50" fill="#4a72d6"/>
<rect x="1476.40" y="459.90" width="5.75" height="194.10" fill="#4a72d6"/>
<rect x="1483.24" y="464.70" width="5.75" height="189.30" fill="#4a72d6"/>
<rect x="1490.08" y="451.40" width="5.75" height="202.60" fill="#4a72d6"/>
<rect x="1496.91" y="454.00" width="5.75" height="200.00" fill="#4a72d6"/>
<rect x="1503.75" y="462.00" width="5.75" height="192.00" fill="#4a72d6"/>
<rect x="1510.58" y="430.60" width="5.75" height="223.40" fill="#4a72d6"/>
<rect x="1517.42" y="462.00" width="5.75" height="192.00" fill="#4a72d6"/>
<rect x="1524.26" y="454.90" width="5.75" height="199.10" fill="#4a72d6"/>
<rect x="1531.09" y="442.90" width="5.75" height="211.10" fill="#4a72d6"/>
<rect x="1537.93" y="447.00" width="5.75" height="207.00" fill="#4a72d6"/>
<rect x="1544.76" y="461.10" width="5.75" height="192.90" fill="#4a72d6"/>
<rect x="1551.60" y="466.10" width="5.75" height="187.90" fill="#4a72d6"/>
<rect x="1558.44" y="461.30" width="5.75" height="192.70" fill="#4a72d6"/>
<rect x="1565.27" y="450.60" width="5.75" height="203.40" fill="#4a72d6"/>
<rect x="1572.11" y="451.00" width="5.75" height="203.00" fill="#4a72d6"/>
<rect x="1578.94" y="470.40" width="5.75" height="183.60" fill="#4a72d6"/>
<rect x="1585.78" y="450.90" width="5.75" height="203.10" fill="#4a72d6"/>
<rect x="1592.62" y="460.40" width="5.75" height="193.60" fill="#4a72d6"/>
<rect x="1599.45" y="446.50" width="5.75" height="207.50" fill="#4a72d6"/>
<rect x="1606.29" y="460.90" width="5.75" height="193.10" fill="#4a72d6"/>
<rect x="1613.12" y="448.50" width="5.75" height="205.50" fill="#4a72d6"/>
<rect x="1619.96" y="471.60" width="5.75" height="182.40" fill="#4a72d6"/>
<rect x="1626.80" y="447.90" width="5.75" height="206.10" fill="#4a72d6"/>
<rect x="1633.63" y="436.10" width="5.75" height="217.90" fill="#4a72d6"/>
<rect x="1640.47" y="438.50" width="5.75" height="215.50" fill="#4a72d6"/>
<rect x="1647.30" y="452.60" width="5.75" height="201.40" fill="#4a72d6"/>
<rect x="1654.14" y="438.50" width="5.75" height="215.50" fill="#4a72d6"/>
<rect x="1660.98" y="455.10" width="5.75" height="198.90" fill="#4a72d6"/>
<rect x="1667.81" y="454.20" width="5.75" height="199.80" fill="#4a72d6"/>
<rect x="1674.65" y="441.50" width="5.75" height="212.50" fill="#4a72d6"/>
<rect x="1681.48" y="446.00" width="5.75" height="208.00" fill="#4a72d6"/>
<rect x="1688.32" y="448.00" width="5.75" height="206.00" fill="#4a72d6"/>
<rect x="1695.16" y="446.80" width="5.75" height="207.20" fill="#4a72d6"/>
<rect x="1701.99" y="475.40" width="5.75" height="178.60" fill="#4a72d6"/>
<rect x="1708.83" y="473.30" width="5.75" height="180.70" fill="#4a72d6"/>
<rect x="1715.66" y="430.00" width="5.75" height="224.00" fill="#4a72d6"/>
<rect x="1722.50" y="459.50" width="5.75" height="194.50" fill="#4a72d6"/>
<rect x="1729.34" y="466.80" width="5.75" height="187.20" fill="#4a72d6"/>
<rect x="1736.17" y="440.00" width="5.75" height="214.00" fill="#4a72d6"/>
<rect x="1743.01" y="449.60" width="5.75" height="204.40" fill="#4a72d6"/>
<rect x="1749.84" y="459.70" width="5.75" height="194.30" fill="#4a72d6"/>
<rect x="1756.68" y="439.60" width="5.75" height="214.40" fill="#4a72d6"/>
<rect x="1763.52" y="445.50" width="5.75" height="208.50" fill="#4a72d6"/>
<rect x="1770.35" y="447.00" width="5.75" height="207.00" fill="#4a72d6"/>
<rect x="1777.19" y="454.20" width="5.75" height="199.80" fill="#4a72d6"/>
<rect x="1784.02" y="457.10" width="5.75" height="196.90" fill="#4a72d6"/>
<rect x="1790.86" y="440.40" width="5.75" height="213.60" fill="#4a72d6"/>
<rect x="1797.70" y="459.00" width="5.75" height="195.00" fill="#4a72d6"/>
<rect x="1804.53" y="470.40" width="5.75" height="183.60" fill="#4a72d6"/>
<rect x="1811.37" y="446.80" width="5.75" height="207.20" fill="#4a72d6"/>
<rect x="1818.20" y="466.00" width="5.75" height="188.00" fill="#4a72d6"/>
<rect x="1825.04" y="450.20" width="5.75" height="203.80" fill="#4a72d6"/>
<rect x="1831.88" y="453.20" width="5.75" height="200.80" fill="#4a72d6"/>
<rect x="1838.71" y="447.40" width="5.75" height="206.60" fill="#4a72d6"/>
<rect x="1845.55" y="472.00" width="5.75" height="182.00" fill="#4a72d6"/>
<rect x="1852.38" y="445.20" width="5.75" height="208.80" fill="#4a72d6"/>
<line x1="1038.4" x2="1865" y1="608.00" y2="608.00" stroke="#44487a" stroke-opacity="0.26" stroke-width="1"/>
<line x1="1038.4" x2="1865" y1="562.00" y2="562.00" stroke="#44487a" stroke-opacity="0.26" stroke-width="1"/>
<line x1="1038.4" x2="1865" y1="516.00" y2="516.00" stroke="#44487a" stroke-opacity="0.26" stroke-width="1"/>
<line x1="1038.4" x2="1865" y1="470.00" y2="470.00" stroke="#44487a" stroke-opacity="0.26" stroke-width="1"/>
<line x1="1038.4" x2="1865" y1="424.00" y2="424.00" stroke="#44487a" stroke-opacity="0.26" stroke-width="1"/>
<line x1="1127" x2="1127" y1="424" y2="654" stroke="#44487a" stroke-opacity="0.26" stroke-width="1"/>
<line x1="1229.3" x2="1229.3" y1="424" y2="654" stroke="#44487a" stroke-opacity="0.26" stroke-width="1"/>
<line x1="1332" x2="1332" y1="424" y2="654" stroke="#44487a" stroke-opacity="0.26" stroke-width="1"/>
<line x1="1434.5" x2="1434.5" y1="424" y2="654" stroke="#44487a" stroke-opacity="0.26" stroke-width="1"/>
<line x1="1537" x2="1537" y1="424" y2="654" stroke="#44487a" stroke-opacity="0.26" stroke-width="1"/>
<line x1="1639.5" x2="1639.5" y1="424" y2="654" stroke="#44487a" stroke-opacity="0.26" stroke-width="1"/>
<line x1="1742" x2="1742" y1="424" y2="654" stroke="#44487a" stroke-opacity="0.26" stroke-width="1"/>
<line x1="1844.5" x2="1844.5" y1="424" y2="654" stroke="#44487a" stroke-opacity="0.26" stroke-width="1"/>
<line x1="1038.4" x2="1038.4" y1="424" y2="654.5" stroke="#4d5075" stroke-width="1.3"/>
<line x1="1038.4" x2="1865" y1="654" y2="654" stroke="#4d5075" stroke-width="1.3"/>
<line x1="134.5" x2="1864.8" y1="986.70" y2="986.70" stroke="#cfd1dd" stroke-width="1"/>
<line x1="134.5" x2="1864.8" y1="957.40" y2="957.40" stroke="#cfd1dd" stroke-width="1"/>
<line x1="134.5" x2="1864.8" y1="928.10" y2="928.10" stroke="#cfd1dd" stroke-width="1"/>
<line x1="134.5" x2="1864.8" y1="898.80" y2="898.80" stroke="#cfd1dd" stroke-width="1"/>
<line x1="134.5" x2="1864.8" y1="869.50" y2="869.50" stroke="#cfd1dd" stroke-width="1"/>
<line x1="134.5" x2="1864.8" y1="840.20" y2="840.20" stroke="#cfd1dd" stroke-width="1"/>
<line x1="320.00" x2="320.00" y1="840" y2="1016" stroke="#cfd1dd" stroke-width="1"/>
<line x1="534.63" x2="534.63" y1="840" y2="1016" stroke="#cfd1dd" stroke-width="1"/>
<line x1="749.26" x2="749.26" y1="840" y2="1016" stroke="#cfd1dd" stroke-width="1"/>
<line x1="963.89" x2="963.89" y1="840" y2="1016" stroke="#cfd1dd" stroke-width="1"/>
<line x1="1178.51" x2="1178.51" y1="840" y2="1016" stroke="#cfd1dd" stroke-width="1"/>
<line x1="1393.14" x2="1393.14" y1="840" y2="1016" stroke="#cfd1dd" stroke-width="1"/>
<line x1="1607.77" x2="1607.77" y1="840" y2="1016" stroke="#cfd1dd" stroke-width="1"/>
<line x1="1822.40" x2="1822.40" y1="840" y2="1016" stroke="#cfd1dd" stroke-width="1"/>
<polyline points="141.50,922.40 155.81,934.34 170.12,931.41 184.44,928.37 198.75,938.84 213.06,928.37 227.37,922.40 241.68,928.37 256.00,934.34 270.31,937.04 284.62,926.68 298.93,920.83 313.24,926.91 327.56,938.50 341.87,943.01 356.18,957.64 370.49,947.51 384.80,946.05 399.12,915.20 413.43,909.23 427.74,945.59 442.05,922.74 456.36,928.37 470.68,918.24 484.99,932.54 499.30,920.83 513.61,929.50 527.92,938.84 542.24,926.91 556.55,920.83 570.86,929.50 585.17,934.34 599.48,935.69 613.80,926.91 628.11,926.91 642.42,931.41 656.73,925.33 671.04,931.41 685.36,937.04 699.67,934.34 713.98,926.12 728.29,919.37 742.60,938.50 756.92,947.17 771.23,928.37 785.54,922.74 799.85,935.69 814.16,934.34 828.48,919.93 842.79,932.87 857.10,920.83 871.41,926.91 885.72,931.41 900.04,931.41 914.35,929.83 928.66,934.34 942.97,928.37 957.28,938.50 971.60,922.74 985.91,925.56 1000.22,931.75 1014.53,939.97 1028.84,929.83 1043.16,946.05 1057.47,948.97 1071.78,943.01 1086.09,937.04 1100.40,937.04 1114.72,909.57 1129.03,922.74 1143.34,925.56 1157.65,937.04 1171.96,926.91 1186.28,918.24 1200.59,926.91 1214.90,937.04 1229.21,941.54 1243.52,935.69 1257.84,929.83 1272.15,928.37 1286.46,915.42 1300.77,925.33 1315.08,915.20 1329.40,915.20 1343.71,938.50 1358.02,916.78 1372.33,926.91 1386.64,935.69 1400.96,939.97 1415.27,932.87 1429.58,923.87 1443.89,918.24 1458.20,942.67 1472.52,925.56 1486.83,928.37 1501.14,932.87 1515.45,932.87 1529.76,932.87 1544.08,928.37 1558.39,925.56 1572.70,932.87 1587.01,935.69 1601.32,935.69 1615.64,932.87 1629.95,944.47 1644.26,921.05 1658.57,945.59 1672.88,926.91 1687.20,932.87 1701.51,931.41 1715.82,938.84 1730.13,931.41 1744.44,934.34 1758.76,928.37 1773.07,943.01 1787.38,935.69 1801.69,934.34 1816.00,919.70 1830.32,937.04 1844.63,934.34 1858.94,928.37" fill="none" stroke="#2b7a55" stroke-width="1.75" stroke-linejoin="round"/>
<polyline points="141.50,978.69 155.81,956.18 170.12,967.77 184.44,972.61 198.75,966.65 213.06,969.46 227.37,982.74 241.68,967.77 256.00,975.31 270.31,973.74 284.62,982.74 298.93,972.28 313.24,972.28 327.56,979.59 341.87,972.61 356.18,967.77 370.49,964.73 384.80,970.81 399.12,967.77 413.43,975.31 427.74,976.78 442.05,978.24 456.36,972.28 470.68,975.31 484.99,973.74 499.30,975.09 513.61,975.09 527.92,970.81 542.24,969.46 556.55,973.74 570.86,960.68 585.17,978.24 599.48,972.28 613.80,970.81 628.11,969.46 642.42,976.78 656.73,962.14 671.04,969.46 685.36,966.65 699.67,959.10 713.98,956.18 728.29,972.28 742.60,966.31 756.92,962.14 771.23,964.96 785.54,980.94 799.85,973.74 814.16,966.65 828.48,973.74 842.79,964.96 857.10,960.68 871.41,973.74 885.72,976.78 900.04,967.77 914.35,969.46 928.66,959.10 942.97,964.96 957.28,962.14 971.60,979.59 985.91,979.59 1000.22,963.61 1014.53,973.74 1028.84,966.65 1043.16,972.28 1057.47,976.78 1071.78,973.74 1086.09,975.09 1100.40,978.24 1114.72,985.45 1129.03,957.64 1143.34,960.68 1157.65,976.78 1171.96,973.74 1186.28,980.94 1200.59,967.77 1214.90,976.78 1229.21,966.65 1243.52,967.77 1257.84,964.96 1272.15,967.77 1286.46,970.81 1300.77,983.87 1315.08,966.65 1329.40,972.61 1343.71,976.78 1358.02,975.31 1372.33,969.46 1386.64,968.11 1400.96,966.31 1415.27,964.96 1429.58,969.46 1443.89,972.28 1458.20,972.28 1472.52,979.59 1486.83,969.46 1501.14,972.28 1515.45,970.81 1529.76,983.87 1544.08,973.74 1558.39,967.77 1572.70,976.78 1587.01,978.24 1601.32,975.31 1615.64,964.96 1629.95,957.64 1644.26,973.74 1658.57,973.74 1672.88,966.65 1687.20,964.96 1701.51,969.46 1715.82,960.68 1730.13,980.94 1744.44,969.46 1758.76,979.59 1773.07,983.87 1787.38,967.77 1801.69,972.28 1816.00,976.78 1830.32,967.77 1844.63,979.59 1858.94,966.65" fill="none" stroke="#d9549e" stroke-width="1.75" stroke-linejoin="round"/>
<polyline points="141.50,904.73 155.81,915.20 170.12,909.23 184.44,923.87 198.75,898.76 213.06,897.64 227.37,905.07 241.68,907.88 256.00,904.73 270.31,901.92 284.62,900.45 298.93,906.42 313.24,899.10 327.56,907.88 341.87,901.92 356.18,897.64 370.49,897.64 384.80,885.93 399.12,906.42 413.43,910.70 427.74,894.82 442.05,894.82 456.36,906.42 470.68,910.70 484.99,907.77 499.30,900.79 513.61,888.97 527.92,907.77 542.24,904.73 556.55,901.92 570.86,913.74 585.17,905.07 599.48,896.29 613.80,916.55 628.11,906.42 642.42,903.60 656.73,909.23 671.04,906.42 685.36,906.42 699.67,916.55 713.98,909.23 728.29,917.90 742.60,912.27 756.92,910.70 771.23,906.42 785.54,900.57 799.85,897.64 814.16,912.05 828.48,925.33 842.79,900.57 857.10,900.57 871.41,900.57 885.72,896.29 900.04,907.77 914.35,910.70 928.66,909.23 942.97,896.06 957.28,894.82 971.60,907.77 985.91,901.92 1000.22,922.74 1014.53,913.74 1028.84,894.82 1043.16,903.60 1057.47,887.28 1071.78,901.92 1086.09,906.42 1100.40,912.05 1114.72,904.73 1129.03,917.90 1143.34,904.73 1157.65,909.23 1171.96,893.47 1186.28,913.74 1200.59,909.23 1214.90,901.92 1229.21,904.73 1243.52,893.47 1257.84,904.73 1272.15,919.37 1286.46,903.60 1300.77,906.42 1315.08,900.57 1329.40,912.27 1343.71,910.70 1358.02,907.77 1372.33,905.07 1386.64,915.20 1400.96,909.23 1415.27,894.82 1429.58,906.42 1443.89,901.92 1458.20,910.70 1472.52,903.60 1486.83,896.29 1501.14,899.10 1515.45,901.92 1529.76,907.77 1544.08,891.78 1558.39,901.92 1572.70,917.68 1587.01,894.82 1601.32,907.77 1615.64,926.46 1629.95,899.10 1644.26,899.10 1658.57,896.06 1672.88,899.10 1687.20,893.14 1701.51,896.06 1715.82,901.92 1730.13,903.60 1744.44,906.42 1758.76,905.07 1773.07,909.23 1787.38,915.20 1801.69,907.77 1816.00,915.20 1830.32,907.77 1844.63,901.92 1858.94,890.10" fill="none" stroke="#25283f" stroke-width="1.75" stroke-linejoin="round"/>
<polyline points="141.50,891.78 155.81,869.83 170.12,877.15 184.44,885.59 198.75,875.80 213.06,888.41 227.37,874.34 241.68,888.63 256.00,885.82 270.31,887.28 284.62,891.78 298.93,884.47 313.24,884.47 327.56,871.52 341.87,881.43 356.18,877.15 370.49,881.65 384.80,891.78 399.12,888.63 413.43,885.59 427.74,853.73 442.05,884.13 456.36,878.50 470.68,882.55 484.99,890.10 499.30,869.83 513.61,875.80 527.92,865.33 542.24,884.13 556.55,878.50 570.86,882.78 585.17,881.65 599.48,888.63 613.80,881.65 628.11,904.73 642.42,894.82 656.73,891.78 671.04,871.52 685.36,890.43 699.67,891.78 713.98,871.52 728.29,884.47 742.60,884.47 756.92,878.50 771.23,881.65 785.54,891.78 799.85,888.97 814.16,894.60 828.48,881.65 842.79,879.96 857.10,882.78 871.41,879.96 885.72,887.28 900.04,884.47 914.35,879.96 928.66,891.78 942.97,878.84 957.28,903.27 971.60,884.47 985.91,879.96 1000.22,891.78 1014.53,887.84 1028.84,881.43 1043.16,878.50 1057.47,887.28 1071.78,871.52 1086.09,888.63 1100.40,890.10 1114.72,878.50 1129.03,881.43 1143.34,894.60 1157.65,875.80 1171.96,875.80 1186.28,887.28 1200.59,885.59 1214.90,888.63 1229.21,879.96 1243.52,898.76 1257.84,891.78 1272.15,885.59 1286.46,884.47 1300.77,888.63 1315.08,874.34 1329.40,898.76 1343.71,887.28 1358.02,884.47 1372.33,879.96 1386.64,888.63 1400.96,888.63 1415.27,888.63 1429.58,885.59 1443.89,879.96 1458.20,890.10 1472.52,888.63 1486.83,888.63 1501.14,885.93 1515.45,896.06 1529.76,887.51 1544.08,888.63 1558.39,893.14 1572.70,879.96 1587.01,888.63 1601.32,890.10 1615.64,868.71 1629.95,891.56 1644.26,887.28 1658.57,879.40 1672.88,871.30 1687.20,881.43 1701.51,877.15 1715.82,888.63 1730.13,887.28 1744.44,885.93 1758.76,881.43 1773.07,882.78 1787.38,877.15 1801.69,868.37 1816.00,881.43 1830.32,879.96 1844.63,896.06 1858.94,891.22" fill="none" stroke="#1447cc" stroke-width="1.75" stroke-linejoin="round"/>
<line x1="134.5" x2="134.5" y1="840" y2="1016.5" stroke="#4d5075" stroke-width="1.3"/>
<line x1="134.5" x2="1864.8" y1="1016" y2="1016" stroke="#4d5075" stroke-width="1.3"/>
</svg>
<div class="t" style="right:1800.4px;top:429.54px;font-size:12px;line-height:16px;text-align:right;color:#565c82;">2,5 s</div>
<div class="t" style="right:1800.4px;top:469.14px;font-size:12px;line-height:16px;text-align:right;color:#565c82;">2 s</div>
<div class="t" style="right:1800.4px;top:513.39px;font-size:12px;line-height:16px;text-align:right;color:#565c82;">1,5 s</div>
<div class="t" style="right:1800.4px;top:557.64px;font-size:12px;line-height:16px;text-align:right;color:#565c82;">1 s</div>
<div class="t" style="right:1800.4px;top:601.89px;font-size:12px;line-height:16px;text-align:right;color:#565c82;">500 ms</div>
<div class="t" style="right:1800.4px;top:641.44px;font-size:12px;line-height:16px;text-align:right;color:#565c82;">0 ms</div>
<div class="t" style="left:200.70px;width:60px;top:656.44px;font-size:12px;line-height:16px;text-align:center;color:#565c82;">14:30</div>
<div class="t" style="left:302.20px;width:60px;top:656.44px;font-size:12px;line-height:16px;text-align:center;color:#565c82;">14:45</div>
<div class="t" style="left:403.60px;width:60px;top:656.44px;font-size:12px;line-height:16px;text-align:center;color:#565c82;">15:00</div>
<div class="t" style="left:505.00px;width:60px;top:656.44px;font-size:12px;line-height:16px;text-align:center;color:#565c82;">15:15</div>
<div class="t" style="left:606.50px;width:60px;top:656.44px;font-size:12px;line-height:16px;text-align:center;color:#565c82;">15:30</div>
<div class="t" style="left:708.00px;width:60px;top:656.44px;font-size:12px;line-height:16px;text-align:center;color:#565c82;">15:45</div>
<div class="t" style="left:809.40px;width:60px;top:656.44px;font-size:12px;line-height:16px;text-align:center;color:#565c82;">16:00</div>
<div class="t" style="left:910.60px;width:60px;top:656.44px;font-size:12px;line-height:16px;text-align:center;color:#565c82;">16:15</div>
<div class="t" style="right:889px;top:420.34px;font-size:12px;line-height:16px;text-align:right;color:#565c82;">1K /min</div>
<div class="t" style="right:889px;top:462.14px;font-size:12px;line-height:16px;text-align:right;color:#565c82;">800 /min</div>
<div class="t" style="right:889px;top:508.14px;font-size:12px;line-height:16px;text-align:right;color:#565c82;">600 /min</div>
<div class="t" style="right:889px;top:554.14px;font-size:12px;line-height:16px;text-align:right;color:#565c82;">400 /min</div>
<div class="t" style="right:889px;top:600.14px;font-size:12px;line-height:16px;text-align:right;color:#565c82;">200 /min</div>
<div class="t" style="right:889px;top:641.44px;font-size:12px;line-height:16px;text-align:right;color:#565c82;">0 /min</div>
<div class="t" style="left:1097.00px;width:60px;top:656.44px;font-size:12px;line-height:16px;text-align:center;color:#565c82;">14:30</div>
<div class="t" style="left:1199.30px;width:60px;top:656.44px;font-size:12px;line-height:16px;text-align:center;color:#565c82;">14:45</div>
<div class="t" style="left:1302.00px;width:60px;top:656.44px;font-size:12px;line-height:16px;text-align:center;color:#565c82;">15:00</div>
<div class="t" style="left:1404.50px;width:60px;top:656.44px;font-size:12px;line-height:16px;text-align:center;color:#565c82;">15:15</div>
<div class="t" style="left:1507.00px;width:60px;top:656.44px;font-size:12px;line-height:16px;text-align:center;color:#565c82;">15:30</div>
<div class="t" style="left:1609.50px;width:60px;top:656.44px;font-size:12px;line-height:16px;text-align:center;color:#565c82;">15:45</div>
<div class="t" style="left:1712.00px;width:60px;top:656.44px;font-size:12px;line-height:16px;text-align:center;color:#565c82;">16:00</div>
<div class="t" style="left:1814.50px;width:60px;top:656.44px;font-size:12px;line-height:16px;text-align:center;color:#565c82;">16:15</div>
<svg style="left:91.0px;top:749.2px" width="14" height="7.0" viewBox="0 0 14 7.0" fill="none" stroke="#2a2d4e" stroke-width="1.5"><path d="M1 6.5 L7.0 0.5 L13 6.5"/></svg>
<div class="t " style="left:124.5px;top:742.66px;font-size:16px;line-height:20px;font-weight:700;letter-spacing:-0.45px;">Active users &amp; sessions</div>
<svg style="left:308px;top:745px" width="16" height="16" viewBox="0 0 16 16"><circle cx="8" cy="8" r="7.2" fill="none" stroke="#545a80" stroke-width="1.4"/><rect x="7.25" y="6.6" width="1.5" height="5.6" fill="#545a80"/><circle cx="8" cy="4.4" r="0.95" fill="#545a80"/></svg>
<div class="a" style="left:1602px;top:737px;width:224px;height:32px;background:#e4e4ea;border-radius:8px 0 0 8px;"></div>
<svg style="left:1608px;top:742px" width="22" height="22" viewBox="0 0 22 22">
<defs>
<radialGradient id="pg1" cx="0.55" cy="0.35" r="0.7"><stop offset="0" stop-color="#eef0f8"/><stop offset="0.6" stop-color="#d3d8e8"/><stop offset="1" stop-color="#9aa4c4"/></radialGradient>
<linearGradient id="ag1" x1="0" y1="0" x2="0.3" y2="1"><stop offset="0" stop-color="#1a36c0"/><stop offset="1" stop-color="#4d86ea"/></linearGradient>
</defs>
<path d="M11.1 3.1 L19.8 7.7 L14 12.1 L11.1 10.9 Z" fill="url(#ag1)" stroke="#86b2fb" stroke-width="0.9" stroke-linejoin="round"/>
<circle cx="10.1" cy="6.6" r="3.3" fill="url(#pg1)"/>
<path d="M3.1 18.4 C3.1 14 6.4 11.4 10.3 11.4 C14.2 11.4 17.5 14 17.5 18.4 Q17.5 19 16.9 19 L3.7 19 Q3.1 19 3.1 18.4 Z" fill="url(#pg1)"/>
</svg>
<div class="t " style="left:1638.6px;top:743.85px;font-size:14px;line-height:20px;">Open with Users &amp; Sessions</div>
<div class="a" style="left:1828px;top:737px;width:36px;height:32px;background:#e4e4ea;border-radius:0 8px 8px 0;"></div>
<svg style="left:1843.8px;top:746px" width="4" height="14" viewBox="0 0 4 14" fill="#2a2d4e"><circle cx="2" cy="2" r="1.6"/><circle cx="2" cy="7" r="1.6"/><circle cx="2" cy="12" r="1.6"/></svg>
<div class="a" style="left:80px;top:785px;width:203.0px;height:32px;background:#e4e4ea;border-radius:8px;"></div>
<div class="t" style="left:76.00px;width:94.6px;top:790.45px;font-size:14px;line-height:20px;text-align:center;">Combined</div>
<div class="a" style="left:165.6px;top:786px;width:116.4px;height:30px;background:#fff;border:1px solid #d9dae3;border-radius:7px;"></div>
<div class="t" style="left:160.60px;width:126.4px;top:790.45px;font-size:14px;line-height:20px;text-align:center;">Split by version</div>
<div class="a" style="left:291px;top:785px;width:215.5px;height:32px;background:#e4e4ea;border-radius:8px;"></div>
<div class="a" style="left:292px;top:786px;width:97px;height:30px;background:#fff;border:1px solid #d9dae3;border-radius:7px;"></div>
<div class="t" style="left:287.00px;width:107px;top:790.45px;font-size:14px;line-height:20px;text-align:center;">Active users</div>
<div class="t" style="left:384.00px;width:126.5px;top:790.45px;font-size:14px;line-height:20px;text-align:center;">Active sessions</div>
<div class="a" style="left:515.4px;top:785px;width:223.6px;height:32px;background:#e4e4ea;border-radius:8px;"></div>
<div class="t " style="left:528.5px;top:790.95px;font-size:14px;line-height:20px;">Top 3 contributors by count</div>
<svg style="left:716px;top:798.5px" width="10" height="6" viewBox="0 0 10 6" fill="none" stroke="#2a2d4e" stroke-width="1.5"><path d="M1 0.8 L5 4.8 L9 0.8"/></svg>
<div class="t" style="right:1792.6px;top:836.44px;font-size:12px;line-height:16px;text-align:right;color:#565c82;">120 /min</div>
<div class="t" style="right:1792.6px;top:861.64px;font-size:12px;line-height:16px;text-align:right;color:#565c82;">100 /min</div>
<div class="t" style="right:1792.6px;top:890.94px;font-size:12px;line-height:16px;text-align:right;color:#565c82;">80 /min</div>
<div class="t" style="right:1792.6px;top:920.24px;font-size:12px;line-height:16px;text-align:right;color:#565c82;">60 /min</div>
<div class="t" style="right:1792.6px;top:949.54px;font-size:12px;line-height:16px;text-align:right;color:#565c82;">40 /min</div>
<div class="t" style="right:1792.6px;top:978.84px;font-size:12px;line-height:16px;text-align:right;color:#565c82;">20 /min</div>
<div class="t" style="right:1792.6px;top:1003.54px;font-size:12px;line-height:16px;text-align:right;color:#565c82;">0 /min</div>
<div class="t" style="left:290.00px;width:60px;top:1017.84px;font-size:12px;line-height:16px;text-align:center;color:#565c82;">14:30</div>
<div class="t" style="left:504.63px;width:60px;top:1017.84px;font-size:12px;line-height:16px;text-align:center;color:#565c82;">14:45</div>
<div class="t" style="left:719.26px;width:60px;top:1017.84px;font-size:12px;line-height:16px;text-align:center;color:#565c82;">15:00</div>
<div class="t" style="left:933.89px;width:60px;top:1017.84px;font-size:12px;line-height:16px;text-align:center;color:#565c82;">15:15</div>
<div class="t" style="left:1148.51px;width:60px;top:1017.84px;font-size:12px;line-height:16px;text-align:center;color:#565c82;">15:30</div>
<div class="t" style="left:1363.14px;width:60px;top:1017.84px;font-size:12px;line-height:16px;text-align:center;color:#565c82;">15:45</div>
<div class="t" style="left:1577.77px;width:60px;top:1017.84px;font-size:12px;line-height:16px;text-align:center;color:#565c82;">16:00</div>
<div class="t" style="left:1792.40px;width:60px;top:1017.84px;font-size:12px;line-height:16px;text-align:center;color:#565c82;">16:15</div>
<div class="a" style="left:958px;top:1041px;width:36px;height:2px;background:#5b5f80;border-radius:1px;"></div>
<div class="a" style="left:88px;top:1063px;width:8px;height:8px;border-radius:4px;background:#1447cc"></div>
<div class="t " style="left:106.4px;top:1056.91px;font-size:12.1px;line-height:20px;-webkit-text-stroke:0.3px #2a2d4e;">Other</div>
<div class="a" style="left:536px;top:1063px;width:8px;height:8px;border-radius:4px;background:#25283f"></div>
<div class="t " style="left:554.4px;top:1056.91px;font-size:12.1px;line-height:20px;-webkit-text-stroke:0.3px #2a2d4e;">7983</div>
<div class="a" style="left:984px;top:1063px;width:8px;height:8px;border-radius:4px;background:#2b7a55"></div>
<div class="t " style="left:1002.4px;top:1056.91px;font-size:12.1px;line-height:20px;-webkit-text-stroke:0.3px #2a2d4e;">7.9.7983</div>
<div class="a" style="left:1432px;top:1063px;width:8px;height:8px;border-radius:4px;background:#d9549e"></div>
<div class="t " style="left:1450.4px;top:1056.91px;font-size:12.1px;line-height:20px;-webkit-text-stroke:0.3px #2a2d4e;">3543</div>
</div></body></html>
